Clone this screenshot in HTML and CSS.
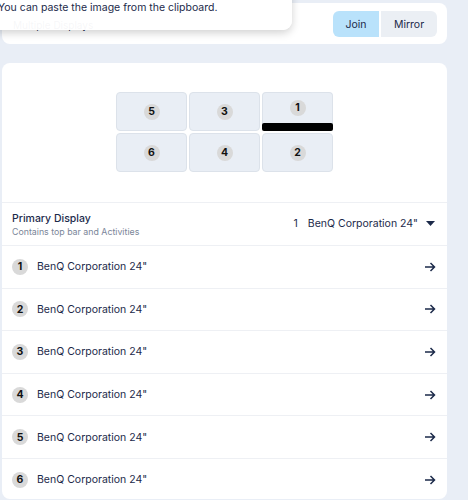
FILE: index.html
```html
<!DOCTYPE html>
<html>
<head>
<meta charset="utf-8">
<link rel="stylesheet" href="styles.css">
</head>
<body>
<div class="top-card">
  <span class="faded">Multiple Displays</span>
  <div class="seg">
    <button class="seg-btn active">Join</button>
    <button class="seg-btn">Mirror</button>
  </div>
  <div class="tooltip">You can paste the image from the clipboard.</div>
</div>

<div class="main-card">
  <div class="arrangement">
    <div class="grid">
      <div class="cell"><span class="badge">5</span></div>
      <div class="cell"><span class="badge">3</span></div>
      <div class="cell primary"><div class="cell-body"><span class="badge">1</span></div><div class="topbar"></div></div>
      <div class="cell"><span class="badge">6</span></div>
      <div class="cell"><span class="badge">4</span></div>
      <div class="cell"><span class="badge">2</span></div>
    </div>
  </div>

  <div class="row primary-row">
    <div class="prim-text">
      <div class="prim-title">Primary Display</div>
      <div class="prim-sub">Contains top bar and Activities</div>
    </div>
    <div class="prim-select">
      <span class="sel-num">1</span>
      <span>BenQ Corporation 24"</span>
      <svg class="caret" width="9" height="5" viewBox="0 0 9 5"><path d="M0 0h9L4.5 5z" fill="#1c2a4a"/></svg>
    </div>
  </div>

  <div class="row item"><span class="badge">1</span><span class="name">BenQ Corporation 24"</span><svg class="arrow" width="12" height="12" viewBox="0 0 12 12"><path d="M1 6h9.5M6.5 2l4 4-4 4" fill="none" stroke="#1c2a4a" stroke-width="1.5"/></svg></div>
  <div class="row item"><span class="badge">2</span><span class="name">BenQ Corporation 24"</span><svg class="arrow" width="12" height="12" viewBox="0 0 12 12"><path d="M1 6h9.5M6.5 2l4 4-4 4" fill="none" stroke="#1c2a4a" stroke-width="1.5"/></svg></div>
  <div class="row item"><span class="badge">3</span><span class="name">BenQ Corporation 24"</span><svg class="arrow" width="12" height="12" viewBox="0 0 12 12"><path d="M1 6h9.5M6.5 2l4 4-4 4" fill="none" stroke="#1c2a4a" stroke-width="1.5"/></svg></div>
  <div class="row item"><span class="badge">4</span><span class="name">BenQ Corporation 24"</span><svg class="arrow" width="12" height="12" viewBox="0 0 12 12"><path d="M1 6h9.5M6.5 2l4 4-4 4" fill="none" stroke="#1c2a4a" stroke-width="1.5"/></svg></div>
  <div class="row item"><span class="badge">5</span><span class="name">BenQ Corporation 24"</span><svg class="arrow" width="12" height="12" viewBox="0 0 12 12"><path d="M1 6h9.5M6.5 2l4 4-4 4" fill="none" stroke="#1c2a4a" stroke-width="1.5"/></svg></div>
  <div class="row item"><span class="badge">6</span><span class="name">BenQ Corporation 24"</span><svg class="arrow" width="12" height="12" viewBox="0 0 12 12"><path d="M1 6h9.5M6.5 2l4 4-4 4" fill="none" stroke="#1c2a4a" stroke-width="1.5"/></svg></div>
</div>
</body>
</html>
```

FILE: styles.css
```css
* { box-sizing: border-box; }
html, body {
  margin: 0;
  padding: 0;
  background: #e9eef6;
  font-family: Inter, "Noto Sans", sans-serif;
  color: #1c2a4a;
  overflow: hidden;
  height: 500px;
}
.top-card {
  position: relative;
  margin: 3px 21px 0 2px;
  height: 41px;
  background: #fff;
  border-radius: 8px;
  display: flex;
  align-items: center;
  justify-content: space-between;
  padding: 0 10px 0 11px;
}
.faded {
  font-size: 10px;
  color: #1c2a4a;
  margin-top: 2px;
}
.seg {
  display: flex;
  gap: 2px;
  margin-top: 1px;
}
.seg-btn {
  border: none;
  font-family: inherit;
  font-size: 10.5px;
  color: #1c2a4a;
  height: 26px;
  border-radius: 6px;
  background: #ebeff4;
  padding: 0;
}
.seg-btn:first-child { width: 46px; border-radius: 6px 0 0 6px; background: #b9e2fb; }
.seg-btn:last-child { width: 56px; border-radius: 0 6px 6px 0; }
.tooltip {
  position: absolute;
  left: -12px;
  top: -13px;
  width: 302px;
  height: 40px;
  background: rgba(255,255,255,0.96);
  border-radius: 0 0 9px 0;
  box-shadow: 0 3px 9px rgba(0,0,0,0.18);
  font-size: 10.5px;
  padding: 11px 0 0 8px;
  color: #1c2a4a;
  white-space: nowrap;
}
.main-card {
  margin: 19px 21px 0 2px;
  background: #fff;
  border-radius: 8px;
  height: 436px;
  overflow: hidden;
}
.arrangement {
  display: flex;
  justify-content: center;
  padding: 29px 0 30px;
}
.grid {
  display: grid;
  grid-template-columns: repeat(3, 71px);
  grid-template-rows: repeat(2, 39px);
  gap: 2px;
}
.cell {
  background: #e9eef5;
  border: 1px solid #dce2ea;
  border-radius: 4px;
  display: flex;
  align-items: center;
  justify-content: center;
}
.cell.primary {
  flex-direction: column;
  align-items: stretch;
  border-bottom: none;
}
.cell-body {
  flex: 1;
  display: flex;
  align-items: center;
  justify-content: center;
  padding-bottom: 1px;
}
.topbar {
  height: 8px;
  background: #000;
  border-radius: 2px;
  margin: 0 -1px;
}
.badge {
  width: 16px;
  height: 16px;
  border-radius: 50%;
  background: #d9d9d9;
  color: #111;
  font-weight: 700;
  font-size: 10.5px;
  display: inline-flex;
  align-items: center;
  justify-content: center;
  flex-shrink: 0;
}
.row {
  border-top: 1px solid #eef0f4;
  display: flex;
  align-items: center;
  padding: 0 11px 0 10px;
}
.primary-row {
  height: 43px;
  justify-content: space-between;
}
.prim-title {
  font-size: 10.5px;
  font-weight: 500;
  line-height: 13px;
  margin-top: 1px;
}
.prim-sub {
  font-size: 8.8px;
  color: #7b8699;
  line-height: 12px;
  margin-top: 1px;
}
.prim-select {
  display: flex;
  align-items: center;
  font-size: 10.5px;
  margin-top: -2px;
}
.sel-num { margin-right: 10px; }
.caret { margin-left: 8px; margin-right: 1px; }
.item {
  height: 42.6px;
}
.item .name {
  font-size: 10.5px;
  margin-left: 9px;
  flex: 1;
}
```
